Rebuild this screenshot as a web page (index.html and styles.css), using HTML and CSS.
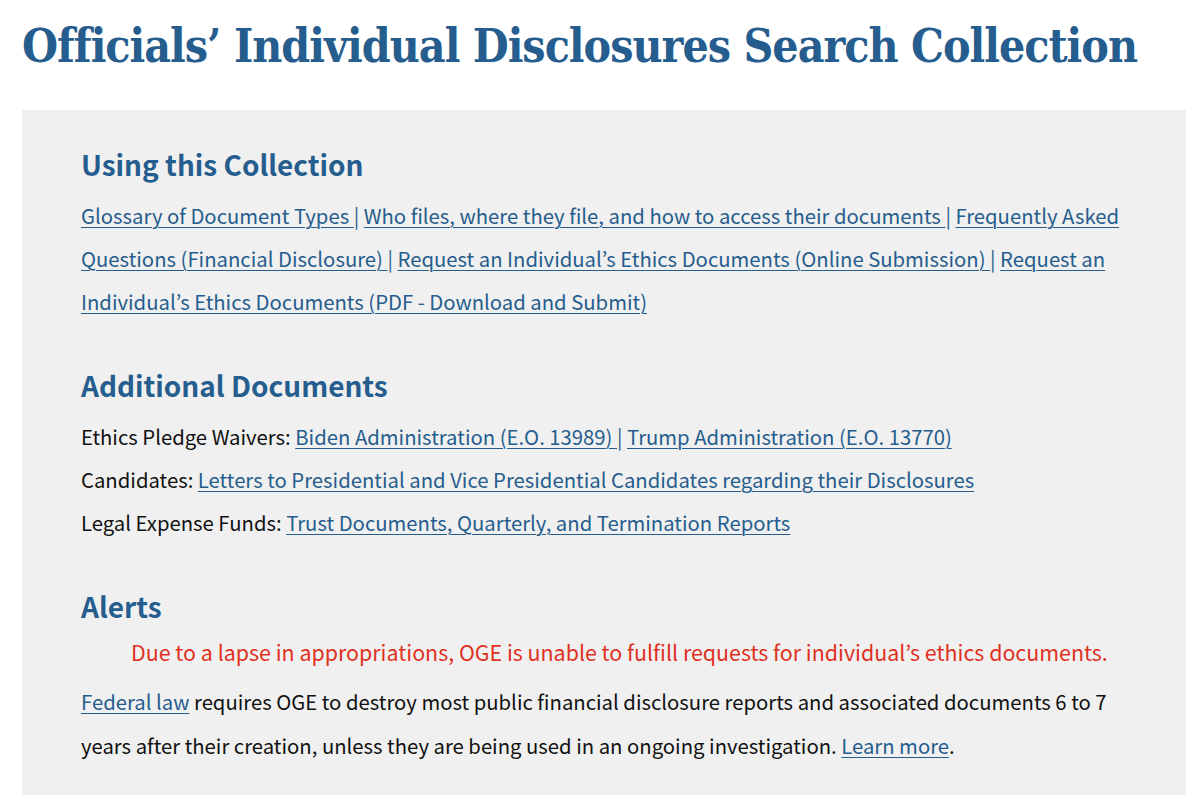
FILE: index.html
```html
<!doctype html>
<html lang="en">

<head>
	<title>Officials' Individual Disclosures Search Collection</title>
	<meta charset="UTF-8">
	<link rel="stylesheet" href="styles.css">
</head>

<body>

<h1 class="page-title">Officials’ Individual Disclosures Search Collection</h1>

<div class="collection-box">

	<section class="box-section">
		<h2 class="box-heading">Using this Collection</h2>
		<p class="box-text">
			<a href="#">Glossary of Document Types </a><span class="sep">|</span>
			<a href="#">Who files, where they file, and how to access their documents </a><span class="sep">|</span>
			<a href="#">Frequently Asked Questions (Financial Disclosure) </a><span class="sep">|</span>
			<a href="#">Request an Individual’s Ethics Documents (Online Submission) </a><span class="sep">|</span>
			<a href="#">Request an Individual’s Ethics Documents (PDF - Download and Submit)</a>
		</p>
	</section>

	<section class="box-section">
		<h2 class="box-heading">Additional Documents</h2>
		<p class="box-text">
			Ethics Pledge Waivers: <a href="#">Biden Administration (E.O. 13989) </a><span class="sep">|</span>
			<a href="#">Trump Administration (E.O. 13770)</a>
		</p>
		<p class="box-text">
			Candidates: <a href="#">Letters to Presidential and Vice Presidential Candidates regarding their Disclosures</a>
		</p>
		<p class="box-text">
			Legal Expense Funds: <a href="#">Trust Documents, Quarterly, and Termination Reports</a>
		</p>
	</section>

	<section class="box-section">
		<h2 class="box-heading">Alerts</h2>
		<p class="box-alert">Due to a lapse in appropriations, OGE is unable to fulfill requests for individual’s ethics documents.</p>
		<p class="box-text box-text-wide">
			<a href="#">Federal law</a> requires OGE to destroy most public financial disclosure reports and associated documents 6 to 7
			years after their creation, unless they are being used in an ongoing investigation. <a href="#">Learn more</a>.
		</p>
	</section>

</div>

</body>
</html>
```

FILE: styles.css
```css
body { margin: 0; padding: 0 14px 0 22px; background-color: #ffffff; color: #111111; font-family: "Noto Sans CJK JP", "Liberation Sans", sans-serif; font-size: 20.3px; }
a { color: #255d8e; text-decoration: underline; text-underline-offset: 3px; text-decoration-thickness: 1px; }
.page-title { margin: 0; padding: 16px 0 0 0; font-family: "DejaVu Serif", "Liberation Serif", serif; font-stretch: condensed; font-size: 46px; letter-spacing: -1px; line-height: 60px; font-weight: bold; color: #255d8e; white-space: nowrap; }
.collection-box { margin-top: 34px; padding: 36px 59px 28px 59px; background-color: #f0f0f0; }
.box-section + .box-section { margin-top: 44px; }
.box-heading { margin: 0 0 12px 0; font-size: 28px; line-height: 36px; font-weight: bold; color: #255d8e; }
.box-text { margin: 0; line-height: 43px; }
.box-text-wide { line-height: 44px; }
.box-alert { margin: -6px 0 6px 0; padding-left: 50px; font-size: 21.4px; line-height: 43px; color: #e0311f; }
.sep { color: #255d8e; }
```
